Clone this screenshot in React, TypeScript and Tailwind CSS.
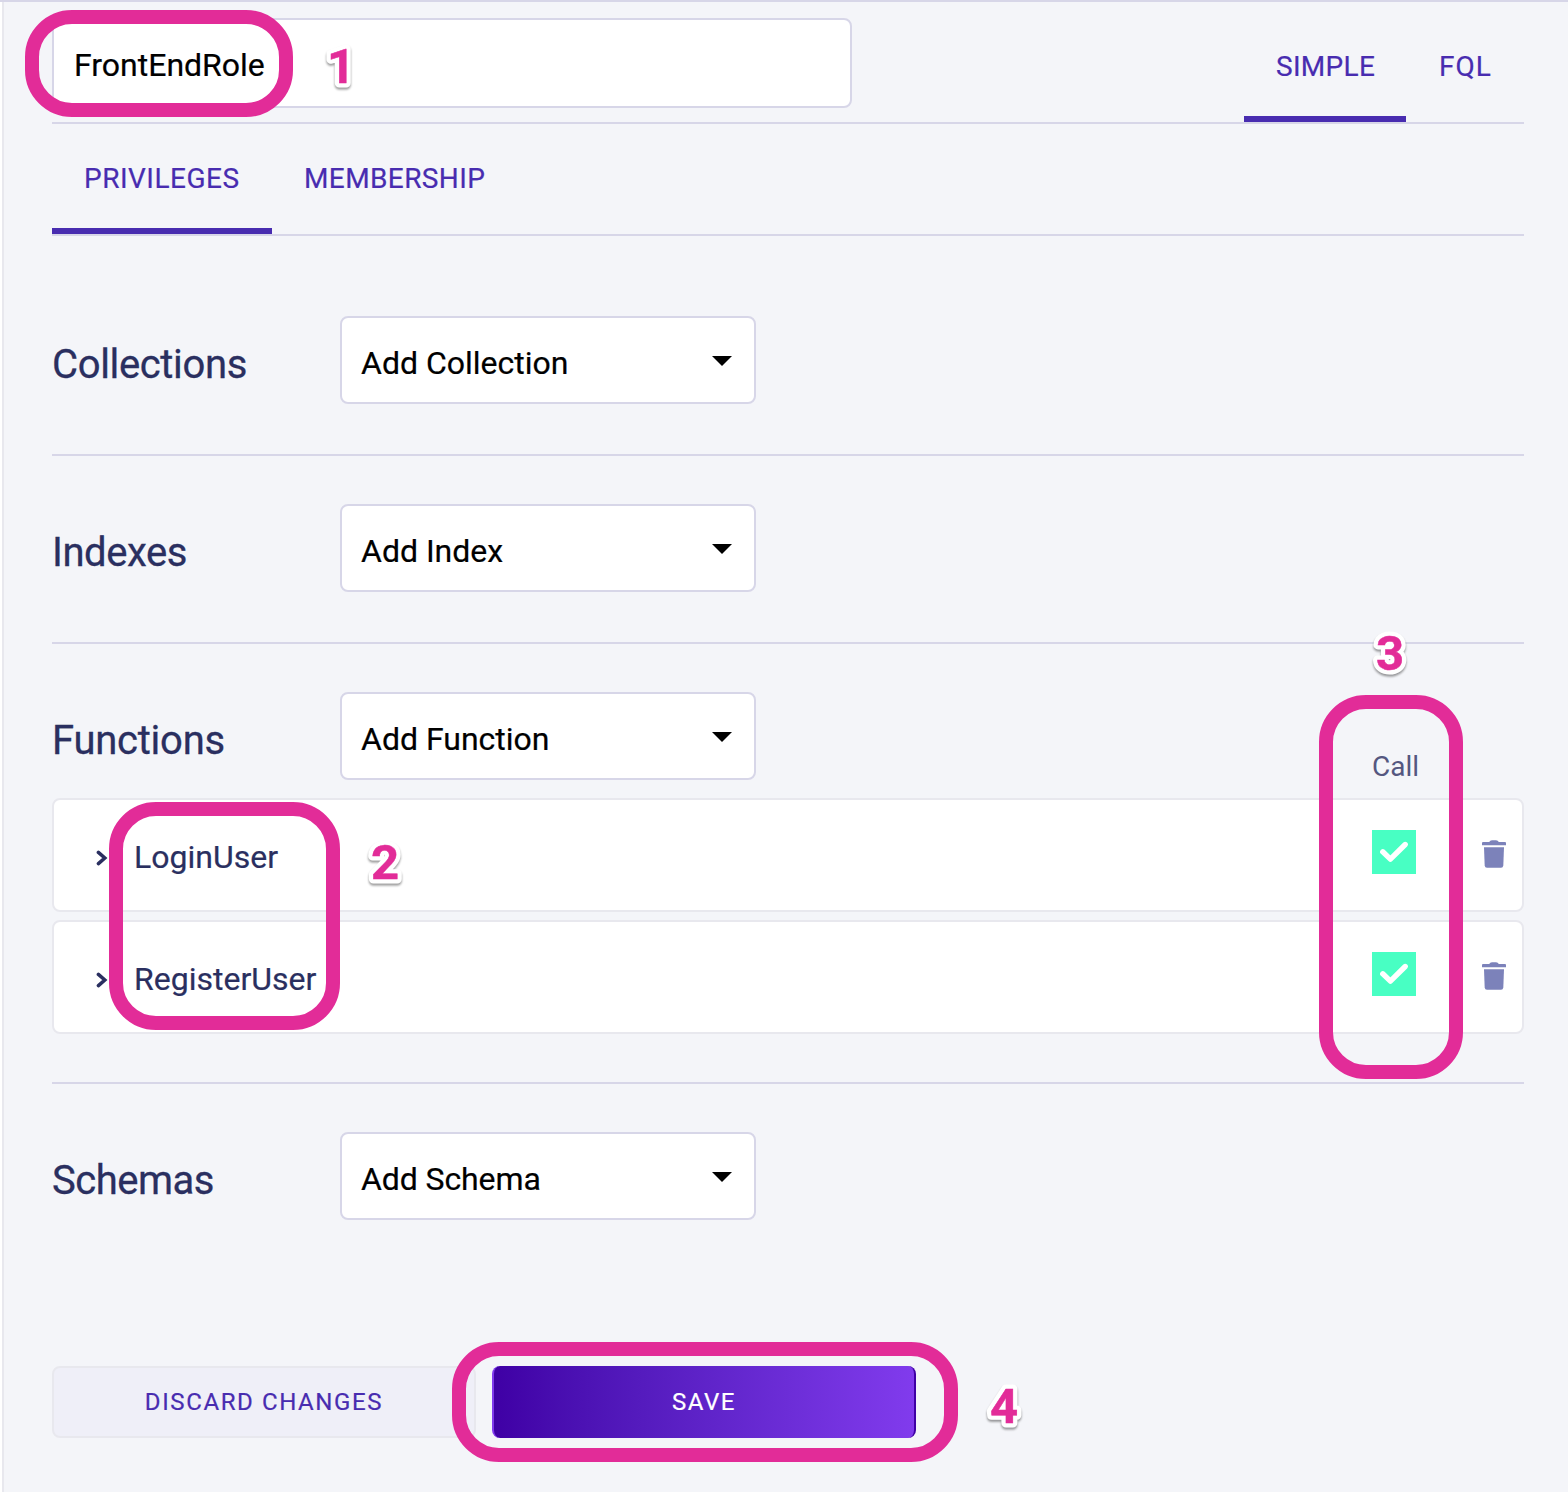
import React from "react";

function Caret() {
  return (
    <svg width="20" height="10" viewBox="0 0 20 10" className="mr-[22px] mt-0.5">
      <path d="M0 0H20L10 10Z" fill="#000" />
    </svg>
  );
}

function Section({ title, titleClass, option, optionClass }: { title: string; titleClass: string; option: string; optionClass: string }) {
  return (
    <div className="flex h-[88px] items-center">
      <h2 className={"w-[288px] shrink-0 pt-2.5 text-[40px] leading-[48px] text-[#2a2f60] [-webkit-text-stroke:0.3px_#2a2f60] " + titleClass}>{title}</h2>
      <button className="flex h-[88px] w-[416px] items-center justify-between rounded-lg border-2 border-[#d7d6e8] bg-white pl-[19px] text-[32px] leading-10 text-black [-webkit-text-stroke:0.2px_black]">
        <span className={"pt-1.5 " + optionClass}>{option}</span>
        <Caret />
      </button>
    </div>
  );
}

function Row({ name, nameClass }: { name: string; nameClass: string }) {
  return (
    <div className="flex h-[114px] items-center rounded-lg border-2 border-[#e8e8ee] bg-white">
      <svg width="12" height="16" viewBox="0 0 12 16" className="ml-[42px] mt-1.5">
        <path d="M2.4 2.4L8.8 8L2.4 13.6" fill="none" stroke="#2a2f60" strokeWidth="3.5" strokeLinecap="round" />
      </svg>
      <span className={"ml-[26px] mt-1 text-[32px] leading-10 text-[#2a2f60] [-webkit-text-stroke:0.2px_#2a2f60] " + nameClass}>{name}</span>
      <span className="mb-1.5 ml-auto mr-[66px] flex size-11 items-center justify-center bg-[#48ffc3]">
        <svg width="44" height="44" viewBox="0 0 44 44">
          <path d="M10.8 21.8L18.4 29.1L33.2 14.5" fill="none" stroke="#fff" strokeWidth="5.4" strokeLinecap="round" strokeLinejoin="round" />
        </svg>
      </span>
      <svg width="24" height="28" viewBox="0 0 24 28" className="mb-0.5 mr-[16px]">
        <path d="M1 2H7.2Q8 .2 10 .2H14Q16 .2 16.8 2H23Q24 2 24 3V5.2H0V3Q0 2 1 2Z" fill="#7c82ba" />
        <path d="M2 7.2H22L21.3 25.5Q21.1 27.8 19 27.8H5Q2.9 27.8 2.7 25.5Z" fill="#7c82ba" />
      </svg>
    </div>
  );
}

function Tab({ label, active, className }: { label: string; active?: boolean; className: string }) {
  return (
    <button
      className={
        "flex items-center border-b-[6px] text-left text-[28px] leading-8 whitespace-nowrap text-[#482cb0] [-webkit-text-stroke:0.2px_#482cb0] " +
        (active ? "border-[#482cb0] " : "border-transparent ") +
        className
      }
    >
      {label}
    </button>
  );
}

function Ring({ className }: { className: string }) {
  return <div className={"pointer-events-none absolute rounded-[47px] border-[14px] border-[#e22c98] " + className} />;
}

function Marker({ n, className }: { n: number; className: string }) {
  return (
    <svg width="48" height="60" viewBox="0 0 48 60" className={"pointer-events-none absolute drop-shadow-[0_2px_1px_rgba(0,0,0,0.4)] " + className}>
      <text x="24" y="45" textAnchor="middle" fontSize="49" fontWeight="700" fill="#fff" stroke="#fff" strokeWidth="9" strokeLinejoin="round">
        {n}
        <title>{`Step ${n}`}</title>
      </text>
      <text x="24" y="45" textAnchor="middle" fontSize="49" fontWeight="700" fill="#e22c98" stroke="#e22c98" strokeWidth="0.5" aria-hidden="true">
        {n}
      </text>
    </svg>
  );
}

export default function App() {
  return (
    <div className="relative h-[1492px] w-[1568px] overflow-hidden border-t-2 border-[#d7d6e8] bg-white font-[Roboto,sans-serif]">
      <div className="ml-0.5 h-full border-l-2 border-[#e8e8ee] bg-[#f4f5f9] pt-4 pr-11 pl-12">
        <header className="flex h-[106px] justify-between border-b-2 border-[#d7d6e8]">
          <div className="flex h-[90px] w-[800px] items-center rounded-lg border-2 border-[#d7d6e8] bg-white pl-5 text-[32px] leading-10 text-black [-webkit-text-stroke:0.2px_black]">
            <span className="pt-1">FrontEndRole</span>
          </div>
          <nav className="flex">
            <Tab label="SIMPLE" active className="w-[162px] pl-8 tracking-[0.3px]" />
            <Tab label="FQL" className="w-[118px] pl-[33px] tracking-[1px]" />
          </nav>
        </header>
        <nav className="flex h-28 border-b-2 border-[#d7d6e8]">
          <Tab label="PRIVILEGES" active className="w-[220px] pt-1.5 pl-8 tracking-[0.5px]" />
          <Tab label="MEMBERSHIP" className="w-[246px] pt-1.5 pl-8 tracking-[0.4px]" />
        </nav>

        <main>
          <section className="border-b-2 border-[#d7d6e8] pt-20 pb-[50px]">
            <Section title="Collections" titleClass="tracking-[-0.35px]" option="Add Collection" optionClass="" />
          </section>
          <section className="border-b-2 border-[#d7d6e8] pt-12 pb-[50px]">
            <Section title="Indexes" titleClass="tracking-[-0.45px]" option="Add Index" optionClass="" />
          </section>
          <section className="border-b-2 border-[#d7d6e8] pt-12 pb-12">
            <div className="flex items-end justify-between">
              <Section title="Functions" titleClass="tracking-[-0.25px]" option="Add Function" optionClass="" />
              <span className="mr-[105px] -mb-[3px] text-[28px] leading-8 text-[#545780]">Call</span>
            </div>
            <div className="mt-[18px] flex flex-col gap-2">
              <Row name="LoginUser" nameClass="" />
              <Row name="RegisterUser" nameClass="" />
            </div>
          </section>
          <section className="pt-12">
            <Section title="Schemas" titleClass="tracking-[-0.5px]" option="Add Schema" optionClass="tracking-[-0.1px]" />
          </section>
        </main>

        <footer className="mt-[146px] flex gap-4 text-[24px] tracking-[1.6px]">
          <button className="h-[72px] w-[424px] rounded-lg border-2 border-[#e8e8ee] bg-[#efeff8] text-[#482cb0] [-webkit-text-stroke:0.2px_#482cb0]">DISCARD CHANGES</button>
          <button className="h-[72px] w-[424px] rounded-lg border-x-2 border-l-[#813bed] border-r-[#3f00a5] bg-linear-to-r from-[#3f00a5] to-[#813bed] text-white [-webkit-text-stroke:0.2px_white]">SAVE</button>
        </footer>
      </div>

      <Ring className="top-2 left-[25px] h-[107px] w-[268px]" />
      <Ring className="top-[799.5px] left-[109px] h-[228.5px] w-[230.5px]" />
      <Ring className="top-[693px] left-[1319px] h-[384px] w-[143.5px]" />
      <Ring className="top-[1339.5px] left-[452px] h-[120.5px] w-[505.5px]" />
      <Marker n={1} className="top-9 left-[317px]" />
      <Marker n={2} className="top-[832px] left-[361px]" />
      <Marker n={3} className="top-[623px] left-[1366px]" />
      <Marker n={4} className="top-[1376px] left-[980px]" />
    </div>
  );
}
